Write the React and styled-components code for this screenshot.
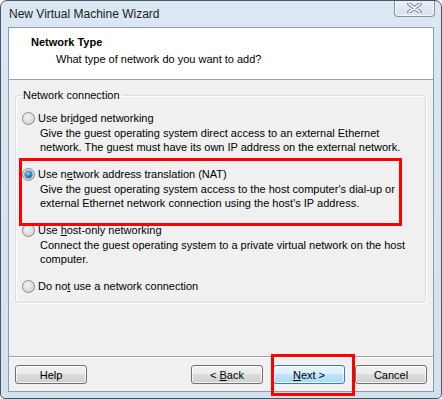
import React from 'react'
import styled, {createGlobalStyle} from 'styled-components'

const GlobalStyle = createGlobalStyle`
    html, body {
        margin: 0;
        padding: 0;
        background: #ffffff;
    }
    body {
        font-family: "Liberation Sans", Arial, sans-serif;
        font-size: 11px;
        color: #000;
    }
`

const options = [
    {
        id: 'bridged',
        label: <>Use br<u>i</u>dged networking</>,
        lines: [
            'Give the guest operating system direct access to an external Ethernet',
            'network. The guest must have its own IP address on the external network.'
        ]
    },
    {
        id: 'nat',
        checked: true,
        label: <>Use n<u>e</u>twork address translation (NAT)</>,
        lines: [
            "Give the guest operating system access to the host computer's dial-up or",
            "external Ethernet network connection using the host's IP address."
        ]
    },
    {
        id: 'hostonly',
        label: <>Use <u>h</u>ost-only networking</>,
        lines: [
            'Connect the guest operating system to a private virtual network on the host',
            'computer.'
        ]
    },
    {
        id: 'none',
        label: <>Do no<u>t</u> use a network connection</>,
        lines: []
    }
]

const App = () => {
    return (
        <>
            <GlobalStyle />
            <Window>
                <TitleBar>
                    <Caption>New Virtual Machine Wizard</Caption>
                    <CloseButton>
                        <svg width="15" height="10" viewBox="0 0 15 10">
                            <path d="M2 1 L13 9 M13 1 L2 9" stroke="#6f7b88" strokeWidth="3.6" strokeLinecap="round" />
                            <path d="M2 1 L13 9 M13 1 L2 9" stroke="#ffffff" strokeWidth="1.6" strokeLinecap="round" />
                        </svg>
                    </CloseButton>
                </TitleBar>

                <Client>
                    <Header>
                        <HeaderTitle>Network Type</HeaderTitle>
                        <HeaderSub>What type of network do you want to add?</HeaderSub>
                    </Header>

                    <Body>
                        <Group>
                            <Legend>Network connection</Legend>
                            <OptionList>
                                {options.map(opt => (
                                    <Option key={opt.id}>
                                        <RadioRow>
                                            <Radio $checked={opt.checked} />
                                            <span>{opt.label}</span>
                                        </RadioRow>
                                        {opt.lines.length > 0 && (
                                            <Desc>
                                                {opt.lines.map((l, i) => <div key={i}>{l}</div>)}
                                            </Desc>
                                        )}
                                    </Option>
                                ))}
                            </OptionList>
                        </Group>
                    </Body>

                    <Footer>
                        <Button><span>Help</span></Button>
                        <Spacer />
                        <Button><span>&lt; <u>B</u>ack</span></Button>
                        <Button $default><span><u>N</u>ext &gt;</span></Button>
                        <Button><span>Cancel</span></Button>
                    </Footer>
                </Client>

                <Highlight style={{left: 18, top: 157, width: 383, height: 68}} />
                <Highlight style={{left: 270, top: 353, width: 84, height: 42}} />
            </Window>
        </>
    )
}

export default App


const Window = styled.div`
    position: relative;
    width: 442px;
    height: 399px;
    box-sizing: border-box;
    display: flex;
    flex-direction: column;
    background: linear-gradient(#dbe7f3, #d3e1ef);
    border: 1px solid #4a5663;
    border-radius: 7px 7px 5px 5px;
    overflow: hidden;
`

const TitleBar = styled.div`
    height: 26px;
    display: flex;
    align-items: flex-start;
    justify-content: space-between;
    flex-shrink: 0;
`

const Caption = styled.div`
    padding: 6px 0 0 8px;
    font-size: 12px;
    line-height: 15px;
    color: #1b1b1b;
`

const CloseButton = styled.div`
    width: 41px;
    height: 17px;
    margin: -1px 6px 0 0;
    box-sizing: border-box;
    display: flex;
    align-items: center;
    justify-content: center;
    border: 1px solid #8592a1;
    border-top: none;
    border-radius: 0 0 4px 4px;
    background: linear-gradient(#e9f0f7, #d7e3ef);
    box-shadow: inset 0 0 0 1px rgba(255, 255, 255, 0.7);
`

const Client = styled.div`
    flex: 1;
    margin: 0 7px 6px 7px;
    border: 1px solid #8d9cae;
    background: #f0f0f0;
    display: flex;
    flex-direction: column;
`

const Header = styled.div`
    height: 52px;
    box-sizing: border-box;
    background: #ffffff;
    border-bottom: 1px solid #a0a0a0;
    padding: 7px 0 0 22px;
    line-height: 15px;
`

const HeaderTitle = styled.div`
    font-weight: bold;
`

const HeaderSub = styled.div`
    margin: 2px 0 0 25px;
`

const Body = styled.div`
    flex: 1;
    padding: 8px 7px 0 6px;
`

const Group = styled.fieldset`
    margin: 0;
    padding: 0 0 9px 6px;
    border: 1px solid #d5dfe5;
    border-radius: 3px;
    box-shadow: inset 1px 1px 0 #ffffff, 1px 1px 0 #ffffff;
`

const Legend = styled.legend`
    margin-left: 0;
    padding: 0 3px 0 1px;
    line-height: 15px;
`

const OptionList = styled.div`
    display: flex;
    flex-direction: column;
    gap: 13px;
    padding-top: 8px;
`

const Option = styled.div`
    display: flex;
    flex-direction: column;
`

const RadioRow = styled.div`
    display: flex;
    align-items: center;
    gap: 3px;
    line-height: 14px;
`

const Radio = styled.span`
    width: 13px;
    height: 13px;
    box-sizing: border-box;
    border-radius: 50%;
    border: 1px solid #8a8a8a;
    background: radial-gradient(circle at 40% 35%, #f4f4f4 0%, #dcdcdc 60%, #cdcdcd 100%);
    display: flex;
    align-items: center;
    justify-content: center;
    flex-shrink: 0;

    &::after {
        content: '';
        width: 7px;
        height: 7px;
        border-radius: 50%;
        display: ${props => props.$checked ? 'block' : 'none'};
        background: radial-gradient(circle at 40% 35%, #9fd6f7 0%, #2a8ad4 45%, #0d4f94 100%);
        box-shadow: 0 0 0 0.5px #1a5fa0;
    }
`

const Desc = styled.div`
    padding-left: 18px;
    line-height: 14px;
    padding-top: 1px;
    white-space: nowrap;
`

const Footer = styled.div`
    height: 35px;
    box-sizing: border-box;
    border-top: 1px solid #a0a0a0;
    box-shadow: inset 0 1px 0 #ffffff;
    display: flex;
    align-items: flex-start;
    gap: 10px;
    padding: 8px 6px 0 6px;
`

const Spacer = styled.div`
    flex: 1;
`

const Button = styled.div`
    width: 72px;
    height: 19px;
    box-sizing: border-box;
    display: flex;
    align-items: center;
    justify-content: center;
    white-space: pre;
    border: 1px solid ${props => props.$default ? '#3c7fb1' : '#707070'};
    border-radius: 3px;
    background: ${props => props.$default
        ? 'linear-gradient(#eaf6fd 0%, #d9f0fc 45%, #bee6fd 50%, #a7d9f5 100%)'
        : 'linear-gradient(#f2f2f2 0%, #ebebeb 45%, #dddddd 50%, #cfcfcf 100%)'};
    box-shadow: inset 0 0 0 1px rgba(255, 255, 255, 0.75);
    line-height: 14px;
`

const Highlight = styled.div`
    position: absolute;
    box-sizing: border-box;
    border: 3px solid #ff0000;
    pointer-events: none;
`
